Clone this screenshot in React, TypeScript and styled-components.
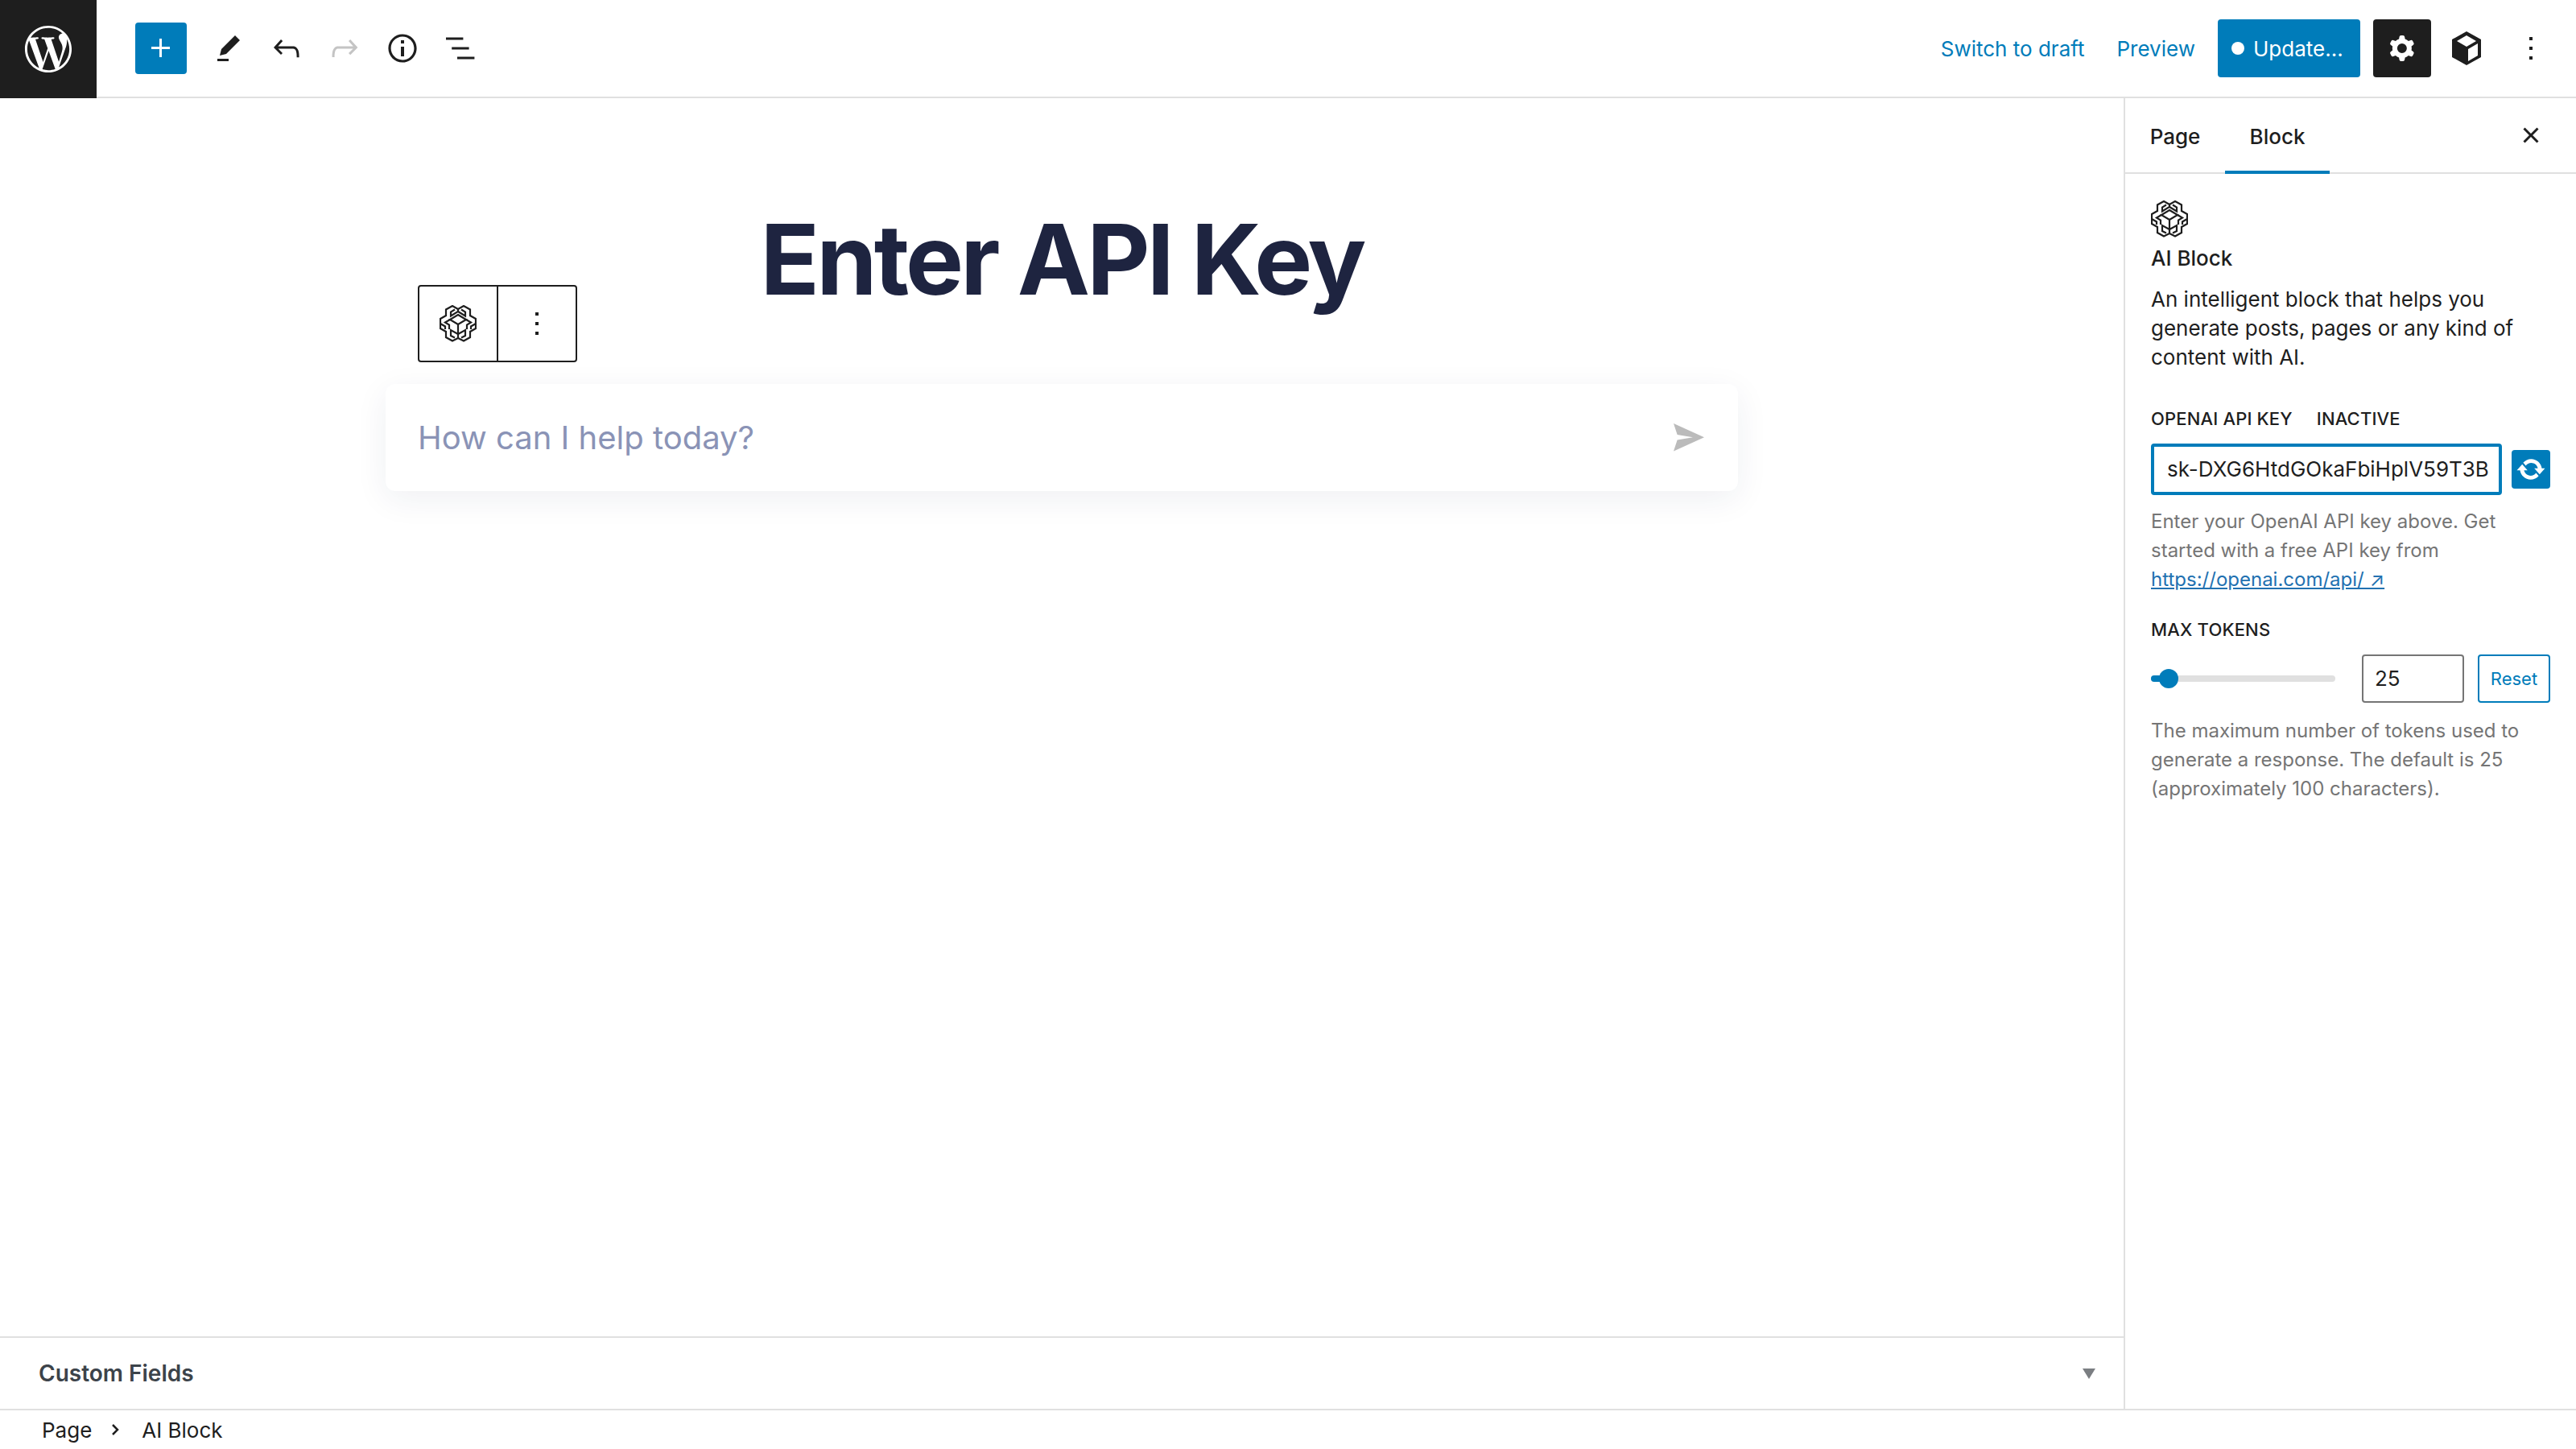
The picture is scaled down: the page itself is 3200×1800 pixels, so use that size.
import { createGlobalStyle } from "styled-components";
import styled from "styled-components";
import { FaWordpressSimple } from "react-icons/fa";

const GlobalStyle = createGlobalStyle`
  html, body {
    background: #fff;
    color: #1e1e1e;
    font-family: Inter, "Noto Sans", sans-serif;
    height: 100%;
    margin: 0;
  }
  * { box-sizing: border-box; }
`;

const BLUE = "#007cba";
const DARK = "#1e1e1e";
const LINE = "#e0e0e0";

const Editor = styled.div`
  display: flex;
  flex-direction: column;
  height: 1800px;
  width: 3200px;
`;

const Header = styled.header`
  align-items: center;
  border-bottom: 2px solid ${LINE};
  display: flex;
  flex: 0 0 122px;
`;

const LogoTile = styled.div`
  align-items: center;
  align-self: stretch;
  background: #1e1e1e;
  color: #fff;
  display: flex;
  flex: 0 0 120px;
  font-size: 60px;
  justify-content: center;
  margin-bottom: -2px;
`;

const ToolGroup = styled.div`
  align-items: center;
  display: flex;
  margin-left: 48px;
`;

const InserterButton = styled.button`
  align-items: center;
  background: ${BLUE};
  border: 0;
  border-radius: 4px;
  color: #fff;
  display: flex;
  height: 64px;
  justify-content: center;
  margin-right: 16px;
  padding: 0;
  width: 64px;
`;

const IconSlot = styled.span<{ $muted?: boolean; $width?: number }>`
  align-items: center;
  color: ${({ $muted }) => ($muted ? "#c4c4c4" : DARK)};
  display: flex;
  height: 64px;
  justify-content: center;
  width: ${({ $width }) => $width ?? 72}px;
`;

const HeaderActions = styled.div`
  align-items: center;
  display: flex;
  margin-left: auto;
  padding-right: 20px;
`;

const TextLink = styled.a<{ $gap: number }>`
  color: ${BLUE};
  font-size: 26px;
  margin-right: ${({ $gap }) => $gap}px;
`;

const UpdateButton = styled.button`
  align-items: center;
  background: ${BLUE};
  border: 0;
  border-radius: 4px;
  color: #fff;
  display: flex;
  font-family: inherit;
  font-size: 26px;
  gap: 11px;
  height: 72px;
  padding: 0 0 0 17px;
  width: 177px;
`;

const Dot = styled.span`
  background: #fff;
  border-radius: 50%;
  height: 16px;
  width: 16px;
`;

const SettingsButton = styled.button`
  align-items: center;
  background: ${DARK};
  border: 0;
  border-radius: 4px;
  color: #fff;
  display: flex;
  height: 72px;
  justify-content: center;
  margin-left: 16px;
  padding: 0;
  width: 72px;
`;

const Workspace = styled.div`
  display: flex;
  flex: 1;
  min-height: 0;
`;

const Main = styled.main`
  display: flex;
  flex: 1;
  flex-direction: column;
  min-width: 0;
`;

const Canvas = styled.div`
  align-items: center;
  display: flex;
  flex: 1;
  flex-direction: column;
  padding-top: 122px;
  position: relative;
`;

const Title = styled.h1`
  color: #1e2440;
  font-size: 121px;
  font-weight: 700;
  letter-spacing: -3.8px;
  line-height: 1.3;
  margin: 0;
`;

const BlockToolbar = styled.div`
  background: #fff;
  border: 2px solid ${DARK};
  border-radius: 4px;
  display: flex;
  height: 96px;
  left: 519px;
  position: absolute;
  top: 232px;
  width: 198px;
`;

const ToolbarCell = styled.div<{ $divided?: boolean }>`
  align-items: center;
  border-left: ${({ $divided }) => ($divided ? `2px solid ${DARK}` : "0")};
  display: flex;
  flex: 1;
  justify-content: center;
`;

const PromptCard = styled.div`
  align-items: center;
  background: #fff;
  border-radius: 12px;
  box-shadow: 0 10px 40px rgba(30, 36, 90, 0.07);
  color: #8a93b6;
  display: flex;
  font-size: 40px;
  height: 133px;
  justify-content: space-between;
  margin-top: 76px;
  padding: 0 42px 0 40px;
  width: 1680px;
`;

const SendIcon = styled.svg`
  color: #bbbbbb;
  display: block;
  height: 35px;
  width: 38px;
`;

const MetaBox = styled.section`
  align-items: center;
  border-top: 2px solid ${LINE};
  color: #3c434a;
  display: flex;
  flex: 0 0 90px;
  font-size: 28px;
  font-weight: 600;
  justify-content: space-between;
  padding: 0 35px 0 48px;
`;

const Caret = styled.span`
  border-left: 8.5px solid transparent;
  border-right: 8.5px solid transparent;
  border-top: 13px solid #7b7e82;
  height: 0;
  width: 0;
`;

const Sidebar = styled.aside`
  border-left: 2px solid ${LINE};
  display: flex;
  flex: 0 0 562px;
  flex-direction: column;
`;

const Tabs = styled.div`
  align-items: stretch;
  border-bottom: 2px solid ${LINE};
  display: flex;
  flex: 0 0 94px;
  font-size: 26px;
  font-weight: 500;
`;

const Tab = styled.div<{ $active?: boolean; $width: number }>`
  align-items: center;
  box-shadow: ${({ $active }) => ($active ? `inset 0 -4px 0 ${BLUE}` : "none")};
  display: flex;
  height: 94px;
  justify-content: center;
  margin-bottom: -2px;
  width: ${({ $width }) => $width}px;
`;

const CloseSlot = styled.div`
  align-items: center;
  display: flex;
  height: 92px;
  justify-content: center;
  margin-left: auto;
  margin-right: 32px;
  width: 48px;
`;

const Panel = styled.div`
  padding: 33px 32px 0 32px;
`;

const BlockName = styled.div`
  font-size: 26px;
  font-weight: 500;
  line-height: 36px;
  margin-top: 4px;
`;

const BlockDesc = styled.p`
  font-size: 26px;
  line-height: 36px;
  margin: 15px 0 0;
`;

const FieldLabel = styled.div<{ $top: number }>`
  display: flex;
  font-size: 22px;
  font-weight: 500;
  gap: 30px;
  letter-spacing: 0.15px;
  line-height: 24px;
  margin-top: ${({ $top }) => $top}px;
`;

const KeyRow = styled.div`
  align-items: center;
  display: flex;
  gap: 12px;
  margin-top: 19px;
`;

const KeyInput = styled.div`
  border: 4px solid ${BLUE};
  border-radius: 4px;
  flex: 0 0 436px;
  font-size: 26px;
  height: 64px;
  line-height: 56px;
  overflow: hidden;
  padding-left: 16px;
  white-space: nowrap;
`;

const RefreshButton = styled.button`
  align-items: center;
  background: ${BLUE};
  border: 0;
  border-radius: 4px;
  color: #fff;
  display: flex;
  height: 48px;
  justify-content: center;
  padding: 0;
  width: 48px;
`;

const HelpText = styled.p<{ $top: number }>`
  color: #757575;
  font-size: 24px;
  line-height: 36px;
  margin: ${({ $top }) => $top}px 0 0;
`;

const HelpLink = styled.a`
  color: #2271b1;
  text-decoration: underline;
`;

const SliderRow = styled.div`
  align-items: center;
  display: flex;
  margin-top: 19px;
`;

const SliderTrack = styled.div`
  background: ${LINE};
  border-radius: 4px;
  flex: 0 0 229px;
  height: 8px;
  position: relative;
`;

const SliderFill = styled.div`
  background: ${BLUE};
  border-radius: 4px;
  height: 100%;
  width: 9%;
`;

const SliderThumb = styled.div`
  background: ${BLUE};
  border-radius: 50%;
  height: 24px;
  left: 4.2%;
  position: absolute;
  top: -8px;
  width: 24px;
`;

const NumberField = styled.div`
  border: 2px solid #757575;
  border-radius: 4px;
  font-size: 26px;
  height: 60px;
  line-height: 56px;
  margin-left: 33px;
  padding-left: 14px;
  width: 127px;
`;

const ResetButton = styled.button`
  background: #fff;
  border: 2px solid ${BLUE};
  border-radius: 4px;
  color: ${BLUE};
  font-family: inherit;
  font-size: 22px;
  height: 60px;
  margin-left: 17px;
  padding: 0;
  width: 90px;
`;

const Breadcrumbs = styled.footer`
  align-items: center;
  border-top: 2px solid ${LINE};
  display: flex;
  flex: 0 0 50px;
  font-size: 26px;
  padding-left: 52px;
`;

const CrumbSep = styled.span`
  align-items: center;
  display: flex;
  justify-content: center;
  margin: 0 22px 0 18px;
  width: 22px;
`;

function WpIcon({ d, size = 48 }: { d: string; size?: number }) {
  return (
    <svg width={size} height={size} viewBox="0 0 24 24" fill="currentColor" fillRule="evenodd">
      <path d={d} />
    </svg>
  );
}

const MORE_DOTS = "M13 19h-2v-2h2v2zm0-6h-2v-2h2v2zm0-6h-2V5h2v2z";

function BrainIcon() {
  return (
    <svg width="46" height="46" viewBox="0 0 46 46" fill="none" stroke="#1e1e1e" strokeWidth="2.2">
      {/* outer outline */}
      <path d="M23 5 16 1 8 5.500V13L1 17V29L8 33V40L16 44.500L23 41 30 44.500 38 40V33L45 29V17L38 13V5.500L30 1Z" />
      {/* centre cube */}
      <path d="M23 12 33 18 23 24 13 18ZM23 24V41" />
      {/* top lobes */}
      <path d="M23 5V8L14 13.500V8.500L19 5.500" />
      <path d="M23 8 32 13.500V8.500L27 5.500" />
      {/* side lobes */}
      <path d="M13 18 7 21.500 12 24.500V30" />
      <path d="M33 18 39 21.500 34 24.500V30" />
      <path d="M1 23 7 26.500V30" />
      <path d="M45 23 39 26.500V30" />
      {/* bottom lobes */}
      <path d="M23 36 14 31V38L19 40.500" />
      <path d="M23 36 32 31V38L27 40.500" />
    </svg>
  );
}

export default function App() {
  return (
    <Editor>
      <GlobalStyle />
      <Header>
        <LogoTile>
          <FaWordpressSimple />
        </LogoTile>
        <ToolGroup>
          <InserterButton>
            <WpIcon d="M11 12.500V17.500H12.500V12.500H17.500V11H12.500V6H11V11H6V12.500H11Z" />
          </InserterButton>
          <IconSlot>
            <WpIcon d="m19 7-3-3-8.500 8.500-1 4 4-1L19 7Zm-7 11.500H5V20h7v-1.500Z" />
          </IconSlot>
          <IconSlot>
            <WpIcon d="M18.300 11.700c-.6-.6-1.400-.9-2.300-.9H6.700l2.900-3.300-1.100-1-4.500 5L8.500 16l1-1-2.700-2.700H16c.5 0 .9.2 1.300.5 1 1 1 3.400 1 4.500v.3h1.500v-.2c0-1.500 0-4.300-1.500-5.700z" />
          </IconSlot>
          <IconSlot $muted>
            <WpIcon d="M15.600 6.500l-1.100 1 2.900 3.300H8c-.9 0-1.700.3-2.300.9-1.400 1.500-1.400 4.200-1.400 5.600v.2h1.500v-.3c0-1.100 0-3.500 1-4.500.3-.3.7-.5 1.300-.5h9.200L14.500 15l1.100 1.100 4.600-4.600-4.600-5z" />
          </IconSlot>
          <IconSlot>
            <WpIcon d="M12 3.200c-4.800 0-8.800 3.900-8.800 8.800 0 4.800 3.900 8.800 8.800 8.800 4.800 0 8.800-3.900 8.800-8.800 0-4.800-4-8.800-8.800-8.800zm0 16c-4 0-7.200-3.300-7.200-7.200C4.800 8 8 4.800 12 4.800s7.200 3.300 7.200 7.200c0 4-3.200 7.200-7.200 7.200zM11 17h2v-6h-2v6zm0-8h2V7h-2v2z" />
          </IconSlot>
          <IconSlot>
            <WpIcon d="M3 5.250h10.700v1.500H3zM6.600 11.250h10.700v1.500H6.600zM10 17.250h10.700v1.500H10z" />
          </IconSlot>
        </ToolGroup>
        <HeaderActions>
          <TextLink $gap={40}>Switch to draft</TextLink>
          <TextLink $gap={28}>Preview</TextLink>
          <UpdateButton>
            <Dot />
            Update...
          </UpdateButton>
          <SettingsButton>
            <WpIcon d="M10.289 4.836A1 1 0 0111.275 4h1.306a1 1 0 01.987.836l.244 1.466c.787.26 1.503.679 2.108 1.218l1.393-.522a1 1 0 011.216.437l.653 1.130a1 1 0 01-.23 1.273l-1.148.944a6.025 6.025 0 010 2.435l1.149.946a1 1 0 01.23 1.272l-.653 1.130a1 1 0 01-1.216.437l-1.394-.522c-.605.54-1.32.958-2.108 1.218l-.244 1.466a1 1 0 01-.987.836h-1.306a1 1 0 01-.986-.836l-.244-1.466a5.995 5.995 0 01-2.108-1.218l-1.394.522a1 1 0 01-1.217-.436l-.653-1.131a1 1 0 01.23-1.272l1.149-.946a6.026 6.026 0 010-2.435l-1.148-.944a1 1 0 01-.23-1.272l.653-1.131a1 1 0 011.217-.437l1.393.522a5.994 5.994 0 012.108-1.218l.244-1.466zM14.929 12a3 3 0 11-6 0 3 3 0 016 0z" />
          </SettingsButton>
          <IconSlot $width={88}>
            <svg width="40" height="48" viewBox="0 0 40 48">
              <path d="M20 3 38 13V35L20 45 2 35V13Z" fill="#1e1e1e" />
              <path d="M20 8 32 15 20 22 8 15Z" fill="#fff" />
              <path d="M34 18V33L22 40V25Z" fill="#fff" />
            </svg>
          </IconSlot>
          <IconSlot $width={72}>
            <WpIcon d={MORE_DOTS} />
          </IconSlot>
        </HeaderActions>
      </Header>
      <Workspace>
        <Main>
          <Canvas>
            <Title>Enter API Key</Title>
            <BlockToolbar>
              <ToolbarCell>
                <BrainIcon />
              </ToolbarCell>
              <ToolbarCell $divided>
                <WpIcon d={MORE_DOTS} />
              </ToolbarCell>
            </BlockToolbar>
            <PromptCard>
              How can I help today?
              <SendIcon viewBox="0 0 38 35">
                <path d="M0 0 38 17.300 0 34.600 4.600 20.600 24 17.300 4.600 14Z" fill="currentColor" />
              </SendIcon>
            </PromptCard>
          </Canvas>
          <MetaBox>
            Custom Fields
            <Caret />
          </MetaBox>
        </Main>
        <Sidebar>
          <Tabs>
            <Tab $width={124}>Page</Tab>
            <Tab $active $width={130}>Block</Tab>
            <CloseSlot>
              <WpIcon d="M12 13.060l3.712 3.713 1.061-1.060L13.061 12l3.712-3.712-1.060-1.060L12 10.938 8.288 7.227l-1.061 1.060L10.939 12l-3.712 3.712 1.060 1.061L12 13.061z" />
            </CloseSlot>
          </Tabs>
          <Panel>
            <BrainIcon />
            <BlockName>AI Block</BlockName>
            <BlockDesc>
              An intelligent block that helps you generate posts, pages or any kind of content with AI.
            </BlockDesc>
            <FieldLabel $top={46}>
              <span>OPENAI API KEY</span>
              <span>INACTIVE</span>
            </FieldLabel>
            <KeyRow>
              <KeyInput>sk-DXG6HtdGOkaFbiHplV59T3B</KeyInput>
              <RefreshButton>
                <svg width="38" height="38" viewBox="0 0 20 20" fill="currentColor">
                  <path d="M10.200 3.280c3.530 0 6.430 2.610 6.920 6h2.080l-3.500 4-3.500-4h2.320c-.45-1.970-2.210-3.440-4.320-3.440-1.450 0-2.730.71-3.540 1.780L4.950 5.660C6.230 4.200 8.110 3.280 10.200 3.280zm-.4 13.440c-3.520 0-6.430-2.610-6.920-6H.8l3.500-4c1.170 1.330 2.330 2.670 3.500 4H5.480c.45 1.970 2.210 3.440 4.320 3.440 1.450 0 2.730-.71 3.540-1.780l1.710 1.950c-1.280 1.460-3.150 2.390-5.250 2.390z" />
                </svg>
              </RefreshButton>
            </KeyRow>
            <HelpText $top={15}>
              Enter your OpenAI API key above. Get started with a free API key from{" "}
              <HelpLink>https://openai.com/api/ ↗</HelpLink>
            </HelpText>
            <FieldLabel $top={32}>
              <span>MAX TOKENS</span>
            </FieldLabel>
            <SliderRow>
              <SliderTrack>
                <SliderFill />
                <SliderThumb />
              </SliderTrack>
              <NumberField>25</NumberField>
              <ResetButton>Reset</ResetButton>
            </SliderRow>
            <HelpText $top={17}>
              The maximum number of tokens used to generate a response. The default is 25 (approximately 100 characters).
            </HelpText>
          </Panel>
        </Sidebar>
      </Workspace>
      <Breadcrumbs>
        <span>Page</span>
        <CrumbSep>
          <svg width="20" height="20" viewBox="0 0 20 20" fill="none" stroke="#1e1e1e" strokeWidth="2.500">
            <path d="M7 4 13 10 7 16" />
          </svg>
        </CrumbSep>
        <span>AI Block</span>
      </Breadcrumbs>
    </Editor>
  );
}
